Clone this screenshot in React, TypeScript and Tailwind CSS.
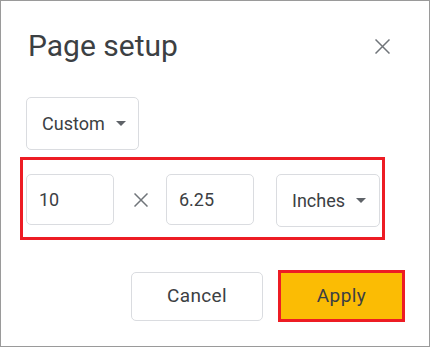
const Caret = () => (
  <svg width="10" height="5" viewBox="0 0 10 5" className="shrink-0">
    <path d="M0 0h10L5 5z" fill="#5f6368" />
  </svg>
)

const Cross = ({ size, color }: { size: number; color: string }) => (
  <svg width={size} height={size} viewBox={`0 0 ${size} ${size}`} className="shrink-0">
    <path d={`M0.5 0.5L${size - 0.5} ${size - 0.5}M${size - 0.5} 0.5L0.5 ${size - 0.5}`} stroke={color} strokeWidth="1.5" />
  </svg>
)

export default function App() {
  return (
    <div
      className="w-[430px] h-[347px] border border-[#9a9a9a] bg-white text-[#3c4043] flex flex-col"
      style={{ fontFamily: "Roboto, 'Liberation Sans', sans-serif" }}
    >
      <div className="flex items-center justify-between pl-[27px] pr-[39px] pt-[25px]">
        <h1 className="text-[30px] leading-[40px] font-normal text-[#3c4043]">Page setup</h1>
        <Cross size={15} color="#70757a" />
      </div>

      <div className="pl-[25px] mt-[31px]">
        <div className="w-[113px] h-[53px] border border-[#dadce0] rounded-[5px] flex items-center pl-[15px] gap-[11px]">
          <span className="text-[18px] leading-none">Custom</span>
          <Caret />
        </div>
      </div>

      <div className="ml-[19px] mt-[7px] w-[365px] h-[83px] border-[3px] border-[#ed1c24] flex items-start pt-[14px] pl-[3px]">
        <div className="w-[88px] h-[51px] border border-[#dadce0] rounded-[5px] flex items-center pl-[12px] text-[18px]">
          10
        </div>
        <div className="w-[52px] flex justify-center items-center h-[51px] pl-[2px]">
          <Cross size={14} color="#70757a" />
        </div>
        <div className="w-[88px] h-[51px] border border-[#dadce0] rounded-[5px] flex items-center pl-[12px] text-[18px]">
          6.25
        </div>
        <div className="ml-[22px] w-[104px] h-[53px] border border-[#dadce0] rounded-[5px] flex items-center pl-[15px] gap-[11px]">
          <span className="text-[18px] leading-none">Inches</span>
          <Caret />
        </div>
      </div>

      <div className="flex justify-end items-center gap-[15px] pr-[24px] mt-[30px]">
        <button className="w-[132px] h-[49px] border border-[#dadce0] rounded-[5px] bg-white text-[19px] tracking-[0.4px]">
          Cancel
        </button>
        <button className="w-[127px] h-[52px] border-[3px] border-[#ed1c24] bg-[#fbbc04] text-[19px] tracking-[0.4px]">
          Apply
        </button>
      </div>
    </div>
  )
}
